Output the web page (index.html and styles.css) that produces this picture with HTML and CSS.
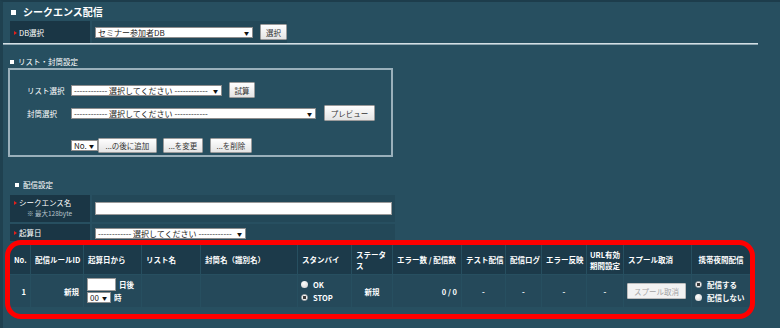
FILE: index.html
```html
<!DOCTYPE html>
<html lang="ja">
<head>
  <meta charset="UTF-8">
  <meta name="viewport" content="width=device-width, initial-scale=1.0">
  <title>シークエンス配信</title>
  <link rel="stylesheet" href="styles.css">
</head>
<body>
  <div class="page">
    <h1 class="ttl"><i class="sq"></i>シークエンス配信</h1>
    <table class="frm frm-db">
      <tr>
        <th><i class="mk"></i>DB選択</th>
        <td><span class="sel sel-db">セミナー参加者DB</span><button class="btn btn-sel">選択</button></td>
      </tr>
    </table>
    <hr class="sep">

    <h2 class="sub"><i class="sq"></i>リスト・封筒設定</h2>
    <div class="box">
      <div class="row">
        <span class="lbl">リスト選択</span>
        <span class="sel sel-list">------------ 選択してください ------------</span>
        <button class="btn btn-calc">試算</button>
      </div>
      <div class="row">
        <span class="lbl">封筒選択</span>
        <span class="sel sel-env">------------ 選択してください ------------</span>
        <button class="btn btn-prev">プレビュー</button>
      </div>
      <div class="row row-ops">
        <span class="lbl"></span>
        <span class="sel sel-no">No.</span>
        <button class="btn btn-add">...の後に追加</button>
        <button class="btn btn-chg">...を変更</button>
        <button class="btn btn-del">...を削除</button>
      </div>
    </div>

    <h2 class="sub sub-in"><i class="sq"></i>配信設定</h2>
    <table class="frm frm-set">
      <tr class="tr-name">
        <th><i class="mk"></i>シークエンス名<small>※ 最大128byte</small></th>
        <td><input class="txt" type="text"></td>
      </tr>
      <tr class="tr-base">
        <th><i class="mk"></i>起算日</th>
        <td><span class="sel sel-base">------------ 選択してください ------------</span></td>
      </tr>
    </table>

    <div class="hl">
      <table class="rules">
        <colgroup>
          <col style="width:20px"><col style="width:52px"><col style="width:57px"><col style="width:58px">
          <col style="width:96px"><col style="width:53px"><col style="width:40px"><col style="width:68px">
          <col style="width:43px"><col style="width:35px"><col style="width:44px"><col style="width:36px">
          <col style="width:67px"><col style="width:58px">
        </colgroup>
        <thead>
          <tr>
            <th>No.</th>
            <th>配信ルールID</th>
            <th>起算日から</th>
            <th>リスト名</th>
            <th>封筒名（識別名）</th>
            <th>スタンバイ</th>
            <th>ステータ<br>ス</th>
            <th>エラー数 / 配信数</th>
            <th>テスト配信</th>
            <th>配信ログ</th>
            <th>エラー反映</th>
            <th class="c">URL有効<br>期間設定</th>
            <th>スプール取消</th>
            <th class="c">携帯夜間配信</th>
          </tr>
        </thead>
        <tbody>
          <tr>
            <td class="r">1</td>
            <td class="r">新規</td>
            <td>
              <div class="ln"><input class="txt txt-day" type="text"><span>日後</span></div>
              <div class="ln"><span class="sel sel-hr">00</span><span>時</span></div>
            </td>
            <td></td>
            <td></td>
            <td class="opts">
              <div class="ln"><i class="rd"></i>OK</div>
              <div class="ln"><i class="rd on"></i>STOP</div>
            </td>
            <td class="c">新規</td>
            <td class="r">0 / 0</td>
            <td class="c">-</td>
            <td class="c">-</td>
            <td class="c">-</td>
            <td class="c">-</td>
            <td><button class="btn btn-off" disabled>スプール取消</button></td>
            <td class="opts">
              <div class="ln"><i class="rd on"></i>配信する</div>
              <div class="ln"><i class="rd"></i>配信しない</div>
            </td>
          </tr>
        </tbody>
      </table>
    </div>
  </div>
</body>
</html>
```

FILE: styles.css
```css
* {
  padding: 0;
  margin: 0;
  box-sizing: border-box;
}
body {
  background-color: #274f60;
  font-family: "Noto Sans CJK JP", "Noto Sans", sans-serif;
  font-size: 7.5px;
  color: #fff;
}
.page {
  width: 780px;
  height: 328px;
  padding-left: 5px;
  border-left: 3px solid #1f4150;
  border-top: 2px solid #1d3d4c;
  overflow: hidden;
}

/* headings */
.sq {
  display: inline-block;
  width: 5px;
  height: 5px;
  background-color: #fff;
  vertical-align: middle;
}
.ttl {
  margin: 3px 0 2px 3px;
  font-size: 10px;
  line-height: 14px;
}
.ttl .sq {
  margin: -2px 7px 0 0;
}
.sub {
  margin: 12px 0 1px 2px;
  font-size: 7.5px;
  font-weight: normal;
  line-height: 10px;
}
.sub .sq {
  width: 4px;
  height: 4px;
  margin: -1px 4px 0 0;
}
.sub-in {
  margin: 23px 0 3px 7px;
}
.sep {
  border: 0;
  height: 2px;
  width: 755px;
  margin-left: -5px;
  background: linear-gradient(#d3dfe4 50%, #8ea6b1 50%);
}

/* form tables */
.frm {
  border-collapse: separate;
  border-spacing: 2px 0;
}
.frm th {
  width: 80px;
  padding-left: 4px;
  background-color: #1a3645;
  font-weight: normal;
  text-align: left;
}
.frm td {
  background-color: #234858;
  padding-left: 3px;
}
.mk {
  display: inline-block;
  border-left: 3px solid #e3211d;
  border-top: 2.5px solid transparent;
  border-bottom: 2.5px solid transparent;
  margin: -1px 2px 0 0;
  vertical-align: middle;
}
.frm-db th,
.frm-db td {
  height: 22px;
}
.frm-db td {
  width: 195px;
}
.frm-set {
  border-spacing: 2px;
}
.frm-set td {
  width: 303px;
}
.tr-name th,
.tr-name td {
  height: 27px;
}
.tr-name th {
  vertical-align: top;
  padding-top: 3px;
  line-height: 10px;
}
.tr-name small {
  display: block;
  padding-left: 13px;
  font-size: 6.5px;
  line-height: 11px;
  color: #b4c3ca;
}
.tr-base th,
.tr-base td {
  height: 17px;
}

/* controls */
.sel {
  display: inline-flex;
  align-items: center;
  height: 11px;
  padding-left: 2px;
  background-color: #fff;
  border: 1px solid #8d8d8d;
  color: #222;
  font-size: 8px;
  font-weight: normal;
  white-space: nowrap;
  overflow: hidden;
  vertical-align: middle;
}
.sel::after {
  content: "▼";
  margin-left: auto;
  padding: 0 3px 0 2px;
  font-size: 5px;
  color: #111;
}
.sel-db { width: 158px; margin-right: 7px; }
.sel-list { width: 151px; }
.sel-env { width: 245px; }
.sel-no { width: 27px; }
.sel-base { width: 151px; }
.sel-hr { width: 24px; }
.btn {
  height: 16px;
  border: 1px solid #9b9b9b;
  border-radius: 1px;
  background: linear-gradient(#fefefe, #e4e4e4);
  color: #333;
  font-family: inherit;
  font-size: 7.5px;
  font-weight: normal;
  white-space: nowrap;
  vertical-align: middle;
}
.btn-sel { width: 27px; }
.btn-calc { width: 26px; margin-left: 7px; }
.btn-prev { width: 51px; margin-left: 8px; }
.btn-add { width: 59px; height: 15px; }
.btn-chg { width: 40px; height: 15px; margin-left: 6px; }
.btn-del { width: 42px; height: 15px; margin-left: 7px; }
.btn-off {
  width: 59px;
  border-color: #bdbdbd;
  background: #f2f2f2;
  color: #a3a3a3;
}
.txt {
  display: block;
  width: 297px;
  height: 13px;
  border: 1px solid #9a9a9a;
  background-color: #fff;
}

/* list and envelope box */
.box {
  width: 385px;
  height: 89px;
  padding: 12px 0 0 17px;
  border: 2px solid #9ab0bb;
}
.row {
  display: flex;
  align-items: center;
  height: 16px;
}
.row + .row {
  margin-top: 7px;
}
.row + .row-ops {
  margin-top: 16px;
}
.lbl {
  width: 44px;
}

/* rule table with annotation */
.hl {
  position: relative;
  width: 742px;
  margin: 1px 0 0 1px;
}
.hl::after {
  content: "";
  position: absolute;
  left: -4px;
  top: -4px;
  right: -4px;
  bottom: -11px;
  border: 5px solid #f00;
  border-radius: 16px;
  pointer-events: none;
}
.rules {
  width: 742px;
  table-layout: fixed;
  border-collapse: separate;
  border-spacing: 1px;
}
.rules th {
  height: 29px;
  padding: 0 2px 0 4px;
  background-color: #1c3a4a;
  font-weight: bold;
  text-align: left;
  line-height: 11px;
  white-space: nowrap;
}
.rules td {
  height: 32px;
  padding: 0 3px;
  background-color: #25495a;
  font-weight: bold;
  white-space: nowrap;
}
.rules .c {
  text-align: center;
  padding: 0;
}
.rules .r {
  text-align: right;
  padding-right: 4px;
}
.ln {
  display: flex;
  align-items: center;
  gap: 3px;
  height: 12px;
}
.ln + .ln {
  margin-top: 1px;
}
.txt-day {
  width: 29px;
}
.opts {
  padding-left: 7px;
}
.opts .ln {
  gap: 0;
}
.rd {
  display: inline-block;
  width: 7px;
  height: 7px;
  margin-right: 5px;
  border-radius: 50%;
  background: radial-gradient(circle at 40% 35%, #fff, #d0d0d0);
}
.rd.on {
  border: 1px solid #b9b9b9;
  background: radial-gradient(circle, #3a3a3a 0 1.4px, #f5f5f5 1.9px);
}
```
